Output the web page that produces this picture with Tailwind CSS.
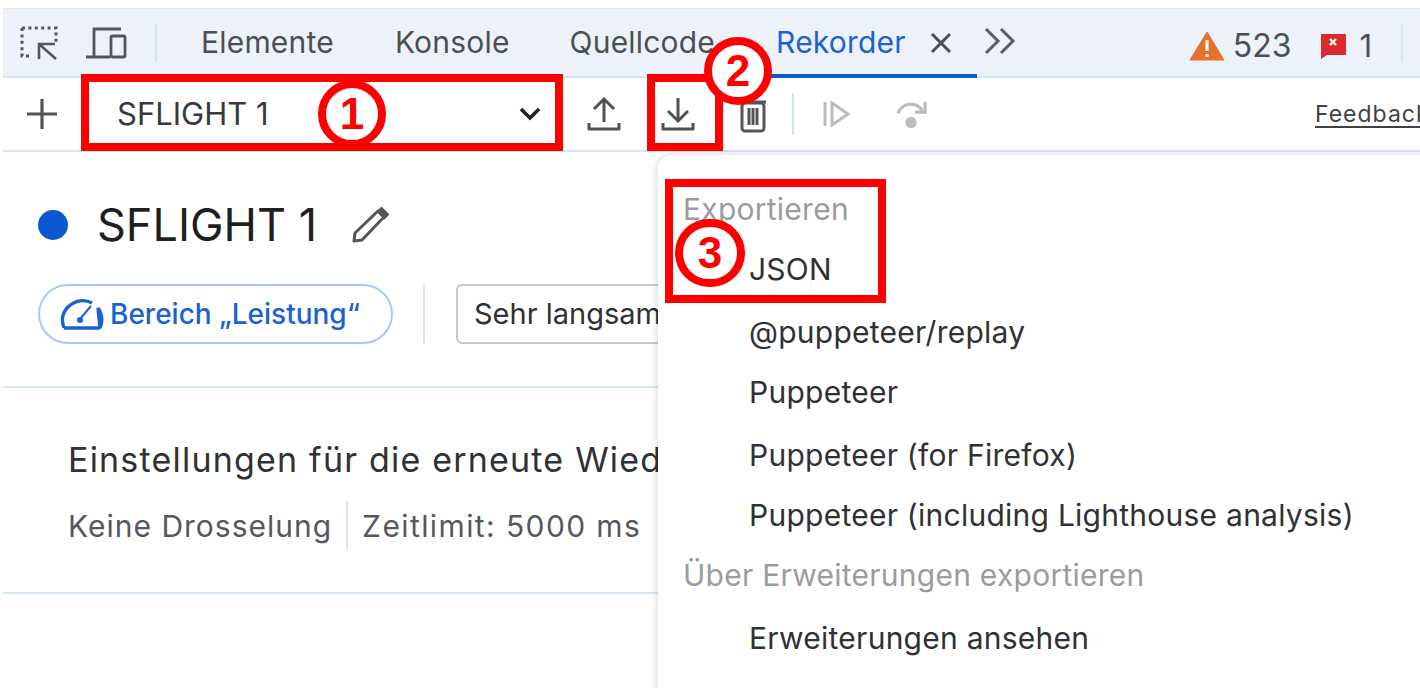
<!DOCTYPE html>
<html lang="de">
<head>
    <meta charset="UTF-8">
    <title>Rekorder</title>
    <script src="https://cdn.jsdelivr.net/npm/@tailwindcss/browser@4"></script>
</head>
<body class="bg-white">
<div class="relative w-[1420px] h-[688px] overflow-hidden bg-white font-['Inter',sans-serif] text-[#45474a]">

    <!-- Tab bar -->
    <div class="relative mt-2 ml-[3px] h-[70px] flex items-center bg-[#edf2fa] border-b-2 border-[#d3e3fd] border-t border-t-[#e6e6e6] *:shrink-0">
        <div class="w-[68px] flex justify-center ml-[2px]">
            <svg width="40" height="38" viewBox="0 0 40 38" fill="none" stroke="#555" stroke-width="3">
                <path d="M3 4h34v14M3 4v28h10" stroke-dasharray="3 3.4"/>
                <path d="M36 21H20v15M20 21l17 15" stroke-width="2.6" transform="translate(0 -1)"/>
            </svg>
        </div>
        <svg class="ml-[12px]" width="42" height="34" viewBox="0 0 42 34" fill="none" stroke="#555" stroke-width="2.8">
            <path d="M36 3H9v28M1 31h24"/>
            <rect x="26" y="10" width="14" height="21" rx="1.5"/>
        </svg>
        <div class="ml-[28px] w-[2px] h-[38px] bg-[#d8e4f7]"></div>
        <span class="ml-[44px] text-[30px] tracking-[0.2px] text-[#4c4f52]">Elemente</span>
        <span class="ml-[61px] text-[30px] tracking-[0.2px] text-[#4c4f52]">Konsole</span>
        <span class="ml-[60px] text-[30px] tracking-[0.2px] text-[#4c4f52]">Quellcode</span>
        <span class="ml-[61px] text-[30px] tracking-[0.2px] text-[#1a62d2]">Rekorder</span>
        <svg class="ml-[24px]" width="22" height="22" viewBox="0 0 22 22" stroke="#4c4f52" stroke-width="3"><path d="M2 2l18 18M20 2L2 20"/></svg>
        <svg class="ml-[32px] mb-[4px]" width="32" height="28" viewBox="0 0 32 28" fill="none" stroke="#5b5e62" stroke-width="3"><path d="M2 2l12 12L2 26M17 2l12 12-12 12"/></svg>
        <svg class="ml-[173px] mt-[6px]" width="36" height="30" viewBox="0 0 36 30"><path d="M18 1L35 29H1z" fill="#e8702a" stroke="#e8702a" stroke-linejoin="round"/><path d="M18 9v11M18 23v3" stroke="#fff" stroke-width="3"/></svg>
        <span class="ml-[8px] mt-[6px] text-[32px] text-[#4c4f52]">523</span>
        <svg class="ml-[27px] mt-[6px]" width="28" height="26" viewBox="0 0 28 26"><path d="M2 1h24a1 1 0 011 1v19a1 1 0 01-1 1H8l-6 4z" fill="#dc2a2f"/><path d="M11 6l6 6M17 6l-6 6" stroke="#fff" stroke-width="2.4"/></svg>
        <span class="ml-[13px] mt-[8px] text-[31px] text-[#4c4f52]">1</span>
        <div class="ml-[29px] w-[2px] h-[38px] bg-[#d8e4f7]"></div>
        <div class="absolute left-[745px] bottom-[-2px] w-[229px] h-[4px] bg-[#0b57d0]"></div>
    </div>

    <!-- Toolbar -->
    <div class="ml-[3px] h-[74px] flex items-center border-b-2 border-[#d9e5f8] *:shrink-0">
        <svg class="ml-[22px]" width="34" height="34" viewBox="0 0 34 34" stroke="#555" stroke-width="3.2"><path d="M17 2v30M2 17h30"/></svg>
        <span class="ml-[58px] w-[401px] text-[31px] text-[#37393c]">SFLIGHT 1</span>
        <svg width="24" height="16" viewBox="0 0 24 16" fill="none" stroke="#222" stroke-width="3.6"><path d="M3 3l9 9 9-9"/></svg>
        <svg class="ml-[45px]" width="34" height="36" viewBox="0 0 34 36" fill="none" stroke="#4f5154" stroke-width="3"><path d="M17 26V4M7 13l10-10 10 10"/><path d="M2 27v6h30v-6" stroke-linejoin="round"/></svg>
        <svg class="ml-[40px]" width="34" height="36" viewBox="0 0 34 36" fill="none" stroke="#4f5154" stroke-width="3"><path d="M17 2v23M7 15l10 10 10-10"/><path d="M2 27v6h30v-6" stroke-linejoin="round"/></svg>
        <svg class="ml-[44px] mt-[3px]" width="28" height="36" viewBox="0 0 28 36" fill="none" stroke="#555" stroke-width="3"><path d="M1 4h26"/><rect x="3" y="5" width="22" height="28" rx="3"/><path d="M10 10v17M14 10v17M18 10v17"/></svg>
        <div class="ml-[25px] w-[2px] h-[42px] bg-[#d3e3fd]"></div>
        <svg class="ml-[28px]" width="28" height="28" viewBox="0 0 28 28" fill="none" stroke="#b9bcc0" stroke-width="3"><path d="M3 2v24M10 3l16 11-16 11z"/></svg>
        <svg class="ml-[46px]" width="32" height="30" viewBox="0 0 34 32" fill="none" stroke="#b9bcc0" stroke-width="3.4"><path d="M2 15c5-11 18-13 26-3"/><path d="M31 3v11H20"/><circle cx="16" cy="25" r="6" fill="#b9bcc0" stroke="none"/></svg>
        <span class="ml-[387px] text-[23px] tracking-[1px] underline underline-offset-4 text-[#3f4144] whitespace-nowrap">Feedback</span>
    </div>

    <!-- Recording header -->
    <div class="ml-[3px] h-[236px] border-b-2 border-[#d9e5f8]">
        <div class="pt-[48px] pl-[35px] flex items-center">
            <div class="w-[30px] h-[30px] rounded-full bg-[#0b57d0]"></div>
            <span class="ml-[29px] text-[45px] leading-[50px] text-[#1f1f1f]">SFLIGHT 1</span>
            <svg class="ml-[34px]" width="38" height="38" viewBox="0 0 38 38" fill="none" stroke="#555" stroke-width="3"><path d="M3 35l1-8L27 5l6 6-22 23z" stroke-linejoin="round"/><path d="M28 3l8 8" stroke-width="7"/></svg>
        </div>
        <div class="mt-[34px] ml-[35px] flex items-center">
            <div class="w-[355px] h-[60px] rounded-full border-2 border-[#a8c7fa] flex items-center">
                <svg class="ml-[20px]" width="44" height="34" viewBox="0 0 44 34" fill="none" stroke="#1a62d2" stroke-width="3.4"><path d="M4 31c-3-8-2-15 4-21 7-7 17-8 24-4M38 11c4 6 5 13 2 20z"/><path d="M4 31h36"/><path d="M20 22l11-13" stroke-width="2"/><circle cx="20" cy="23" r="3" fill="#1a62d2" stroke="none"/></svg>
                <span class="ml-[6px] text-[28px] font-medium text-[#1a62d2] whitespace-nowrap">Bereich „Leistung“</span>
            </div>
            <div class="ml-[30px] w-[2px] h-[60px] bg-[#d9e5f8]"></div>
            <div class="ml-[31px] w-[260px] h-[60px] rounded-[6px] border-2 border-[#c8c8c8] pl-[16px] flex items-center text-[29px] text-[#2f3134] whitespace-nowrap overflow-hidden">Sehr langsames 3G</div>
        </div>
    </div>

    <!-- Replay settings -->
    <div class="ml-[3px] h-[206px] border-b-2 border-[#d9e5f8]">
        <div class="pt-[52px] pl-[65px] text-[34px] leading-[40px] tracking-[1.2px] text-[#2f3134] whitespace-nowrap">Einstellungen für die erneute Wiedergabe</div>
        <div class="mt-[21px] pl-[65px] flex items-center text-[30px] tracking-[1px] text-[#55585c]">
            <span>Keine Drosselung</span>
            <div class="mx-[14px] w-[2px] h-[50px] bg-[#d9e5f8]"></div>
            <span class="tracking-[1.4px]">Zeitlimit: 5000 ms</span>
        </div>
    </div>

    <!-- Export menu -->
    <div class="absolute left-[658px] top-[155px] w-[800px] h-[560px] bg-white rounded-[14px] shadow-[0_0_8px_rgba(0,0,0,0.18)] text-[30px] tracking-[0.25px] text-[#2f3134] whitespace-nowrap">
        <div class="absolute left-[25px] top-[32px] text-[#9a9c9f]">Exportieren</div>
        <div class="absolute left-[91px] top-[92px]">JSON</div>
        <div class="absolute left-[91px] top-[155px]">@puppeteer/replay</div>
        <div class="absolute left-[91px] top-[215px]">Puppeteer</div>
        <div class="absolute left-[91px] top-[278px]">Puppeteer (for Firefox)</div>
        <div class="absolute left-[91px] top-[338px]">Puppeteer (including Lighthouse analysis)</div>
        <div class="absolute left-[25px] top-[398px] text-[#9a9c9f]">Über Erweiterungen exportieren</div>
        <div class="absolute left-[91px] top-[461px]">Erweiterungen ansehen</div>
    </div>

    <!-- Red callouts -->
    <div class="absolute left-[81px] top-[74px] w-[482px] h-[77px] border-[8px] border-[#ff0000]"></div>
    <div class="absolute left-[647px] top-[74px] w-[76px] h-[77px] border-[8px] border-[#ff0000]"></div>
    <div class="absolute left-[665px] top-[179px] w-[221px] h-[124px] border-[8px] border-[#ff0000]"></div>
    <div class="absolute left-[318px] top-[80px] w-[68px] h-[68px] rounded-full bg-white border-[8px] border-[#ff0000] flex items-center justify-center text-[44px] font-bold text-[#ff0000] font-['Liberation_Sans',sans-serif]">1</div>
    <div class="absolute left-[704px] top-[37px] w-[68px] h-[68px] rounded-full bg-white border-[8px] border-[#ff0000] flex items-center justify-center text-[44px] font-bold text-[#ff0000] font-['Liberation_Sans',sans-serif]">2</div>
    <div class="absolute left-[675px] top-[219px] w-[70px] h-[68px] rounded-full bg-white border-[8px] border-[#ff0000] flex items-center justify-center text-[44px] font-bold text-[#ff0000] font-['Liberation_Sans',sans-serif]">3</div>
</div>
</body>
</html>
